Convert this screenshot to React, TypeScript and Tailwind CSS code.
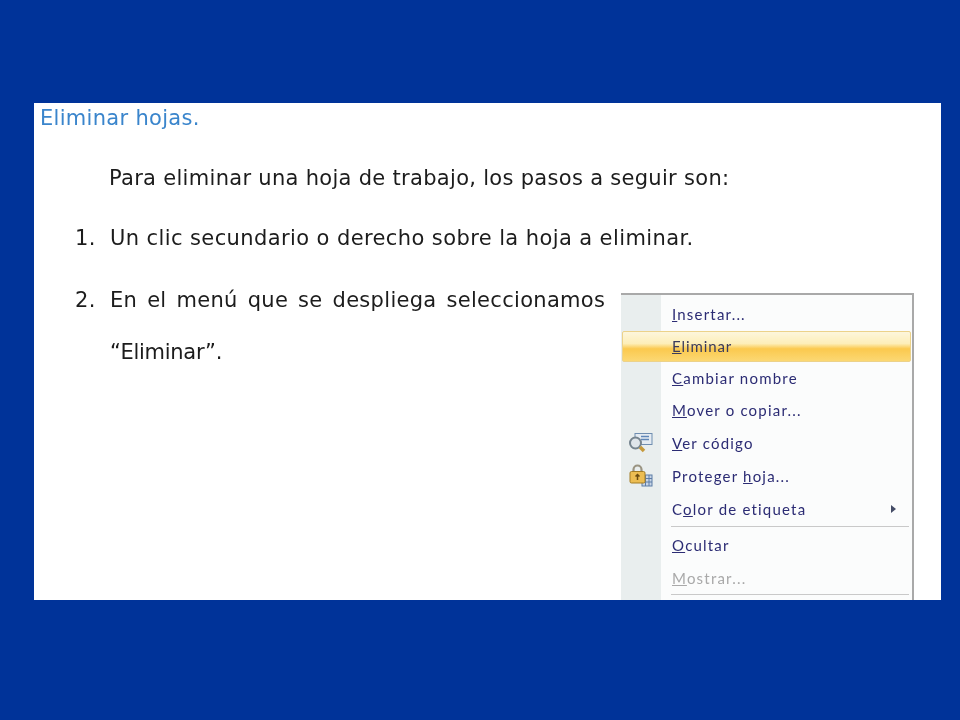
const font = "[font-family:'DejaVu_Sans',sans-serif]"
const menuFont = "[font-family:'Lato',sans-serif]"

function CodeIcon() {
  return (
    <svg width="24" height="22" viewBox="0 0 24 22">
      <rect x="6" y="1.5" width="17" height="11" fill="#e4ebf2" stroke="#6f8db0" />
      <path d="M12 4.5h8M12 7.5h8" stroke="#5f86b8" strokeWidth="1.5" />
      <circle cx="6.5" cy="11" r="5.5" fill="#dfe5ea" stroke="#76848f" strokeWidth="2" />
      <path d="M11 15l4 4" stroke="#c69a3c" strokeWidth="3.5" />
    </svg>
  )
}

function LockIcon() {
  return (
    <svg width="24" height="24" viewBox="0 0 24 24">
      <rect x="13" y="11" width="10" height="11" fill="#c8d5e6" stroke="#5d7ca6" />
      <path d="M13 14.5h10M13 18h10M16.5 11v11M20 11v11" stroke="#5d7ca6" />
      <path d="M4.5 8V5.5a4 4 0 0 1 8 0V8" fill="none" stroke="#9a9482" strokeWidth="2.2" />
      <rect x="1" y="7.5" width="15" height="11.5" rx="1.5" fill="#ecbd52" stroke="#a37c24" />
      <path d="M8.5 10.5v5.5M6.5 12.5l2-2 2 2" fill="none" stroke="#6b4c10" strokeWidth="1.5" />
    </svg>
  )
}

function MenuRow({ children, icon, arrow, disabled, active }: {
  children: React.ReactNode
  icon?: React.ReactNode
  arrow?: boolean
  disabled?: boolean
  active?: boolean
}) {
  return (
    <div
      className={
        active
          ? "mx-px flex h-[31px] items-center rounded-[2px] border border-[#ecd28a] bg-[linear-gradient(#fdf6dc,#fdeeb8_40%,#fbc94e_58%,#fcd873)] text-[#3b3b5c]"
          : disabled
            ? "flex h-[32.7px] items-center text-[#a9a9a9]"
            : "flex h-[32.7px] items-center text-[#2c2c74]"
      }
    >
      <div className={active ? "w-[38px] shrink-0" : "flex w-[40px] shrink-0 items-center justify-center"}>{icon}</div>
      <span className={active ? "ml-[11px] flex-1 text-[15px] tracking-[0.9px]" : "ml-[11px] flex-1 text-[15px] tracking-[1.2px]"}>{children}</span>
      {arrow && <span className="mr-[16px] h-0 w-0 border-y-[4px] border-l-[5px] border-y-transparent border-l-[#444c66]" />}
    </div>
  )
}

export default function App() {
  return (
    <div className={`min-h-[720px] w-[960px] bg-[#003399] pt-[103px] pl-[34px] ${font}`}>
      <div className="flex h-[497px] w-[907px] overflow-hidden bg-white">
        {/* Text */}
        <div className="w-[587px] shrink-0 text-[21px] leading-none tracking-[0.3px] text-[#1c1c1c] blur-[0.5px]">
          <h1 className="mt-[5px] ml-[6px] text-[21px] font-normal text-[#3a85cc]">Eliminar hojas.</h1>
          <p className="mt-[39px] ml-[75px] whitespace-nowrap">Para eliminar una hoja de trabajo, los pasos a seguir son:</p>
          <div className="mt-[39px] flex whitespace-nowrap">
            <span className="ml-[41px] w-[35px] shrink-0">1.</span>
            <span className="tracking-[0.4px]">Un clic secundario o derecho sobre la hoja a eliminar.</span>
          </div>
          <div className="mt-[41px] flex whitespace-nowrap">
            <span className="ml-[41px] w-[35px] shrink-0">2.</span>
            <span className="[word-spacing:3px]">En el menú que se despliega seleccionamos</span>
          </div>
          <p className="mt-[31px] ml-[76px] tracking-[-0.3px]">“Eliminar”.</p>
        </div>

        {/* Context menu */}
        <div className={`relative mt-[190px] h-[330px] w-[293px] shrink-0 border-t-2 border-r-2 border-[#a9a9a9] bg-[#fbfcfc] blur-[0.5px] ${menuFont}`}>
          <div className="absolute top-0 bottom-0 left-0 w-[40px] bg-[#e9eeee]" />
          <div className="relative pt-[3px]">
            <MenuRow><u>I</u>nsertar...</MenuRow>
            <MenuRow active><u>E</u>liminar</MenuRow>
            <MenuRow><u>C</u>ambiar nombre</MenuRow>
            <MenuRow><u>M</u>over o copiar...</MenuRow>
            <MenuRow icon={<CodeIcon />}><u>V</u>er código</MenuRow>
            <MenuRow icon={<LockIcon />}>Proteger <u>h</u>oja...</MenuRow>
            <MenuRow arrow>C<u>o</u>lor de etiqueta</MenuRow>
            <div className="mt-[1px] mr-[3px] mb-[2px] ml-[50px] border-t border-[#c9c9c9]" />
            <MenuRow><u>O</u>cultar</MenuRow>
            <MenuRow disabled><u>M</u>ostrar...</MenuRow>
            <div className="mt-[-1px] mr-[3px] ml-[50px] border-t border-[#c9c9c9]" />
          </div>
        </div>
      </div>
    </div>
  )
}
